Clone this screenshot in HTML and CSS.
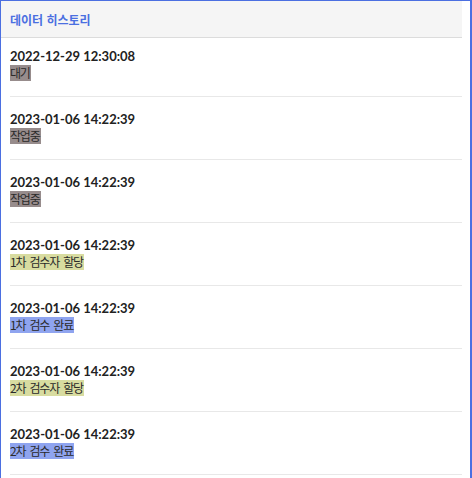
FILE: index.html
```html
<!DOCTYPE html>
<html lang="ko">
<head>
<meta charset="utf-8">
<link rel="stylesheet" href="styles.css">
</head>
<body>
<div class="panel">
  <div class="inner">
    <div class="head">데이터 히스토리</div>
    <ul class="list">
      <li class="item"><div class="date">2022-12-29 12:30:08</div><span class="tag gray">대기</span></li>
      <li class="item"><div class="date">2023-01-06 14:22:39</div><span class="tag gray">작업중</span></li>
      <li class="item"><div class="date">2023-01-06 14:22:39</div><span class="tag gray">작업중</span></li>
      <li class="item"><div class="date">2023-01-06 14:22:39</div><span class="tag yellow">1차 검수자 할당</span></li>
      <li class="item"><div class="date">2023-01-06 14:22:39</div><span class="tag blue">1차 검수 완료</span></li>
      <li class="item"><div class="date">2023-01-06 14:22:39</div><span class="tag yellow">2차 검수자 할당</span></li>
      <li class="item"><div class="date">2023-01-06 14:22:39</div><span class="tag blue">2차 검수 완료</span></li>
    </ul>
  </div>
</div>
</body>
</html>
```
FILE: styles.css
```css
html, body {
  margin: 0;
  padding: 0;
  background: #ffffff;
}
body {
  font-family: "Noto Sans CJK KR", "Noto Sans", sans-serif;
  height: 478px;
  overflow: hidden;
}
.panel {
  border: 1px solid #4b6fe1;
  border-right-width: 2px;
  border-bottom: none;
  width: 469px;
  height: 600px;
  background: #fff;
}
.inner {
  width: 461px;
}
.head {
  height: 36px;
  background: #f5f5f5;
  border-bottom: 1px solid #dcdcdc;
  display: flex;
  align-items: center;
  padding-left: 9px;
  font-size: 12px;
  font-weight: 700;
  color: #4b6fe1;
}
.list {
  list-style: none;
  margin: 0;
  padding: 0 0 0 9px;
}
.item {
  padding: 13px 0 15px;
  border-bottom: 1px solid #e8e8e8;
  display: flex;
  flex-direction: column;
  align-items: flex-start;
}
.item:first-child {
  padding-top: 9px;
}
.date {
  font-family: Lato, "Noto Sans", sans-serif;
  font-weight: 700;
  font-size: 13px;
  line-height: 18px;
  color: #222;
}
.tag {
  display: inline-block;
  font-size: 12px;
  line-height: 16px;
  height: 16px;
  color: #2a2a2a;
  letter-spacing: -1.2px;
  word-spacing: 2px;
  padding-right: 1px;
}
.gray { background: #978c8c; }
.yellow { background: #d8dca0; }
.blue { background: #8fa4ef; }
```
